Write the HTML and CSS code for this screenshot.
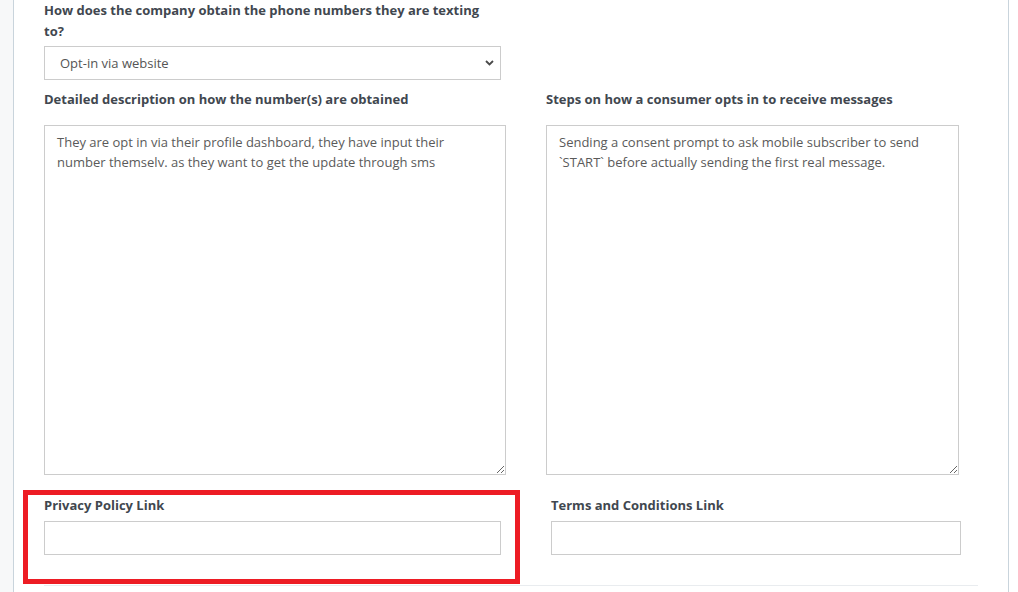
FILE: index.html
```html
<!DOCTYPE html>
<html lang="en">
<head>
    <meta charset="UTF-8">
    <meta name="viewport" content="width=device-width, initial-scale=1.0">
    <title>Campaign details</title>
    <link rel="stylesheet" href="styles.css">
</head>
<body>
    <div class="page">
        <div class="sidebar-edge"></div>

        <div class="panel">
            <div class="field field-source">
                <label class="label" for="source">How does the company obtain the phone numbers they are texting to?</label>
                <div class="select-wrap">
                    <select class="select" id="source">
                        <option>Opt-in via website</option>
                        <option>Opt-in via SMS keyword</option>
                        <option>Paper form</option>
                    </select>
                    <svg class="chevron" width="9" height="6" viewBox="0 0 9 6">
                        <path d="M1 1 L4.5 4.5 L8 1" fill="none" stroke="#4a4a4a" stroke-width="1.8"/>
                    </svg>
                </div>
            </div>

            <div class="row row-text">
                <div class="col col-left">
                    <label class="label label-gap" for="obtained">Detailed description on how the number(s) are obtained</label>
                    <textarea class="textarea" id="obtained">They are opt in via their profile dashboard, they have input their number themselv. as they want to get the update through sms</textarea>
                </div>
                <div class="col col-right">
                    <label class="label label-gap" for="optin">Steps on how a consumer opts in to receive messages</label>
                    <textarea class="textarea" id="optin">Sending a consent prompt to ask mobile subscriber to send `START` before actually sending the first real message.</textarea>
                </div>
            </div>

            <div class="row row-links">
                <div class="highlight"></div>
                <div class="field link-left">
                    <label class="label label-small-gap" for="privacy">Privacy Policy Link</label>
                    <input class="input" type="text" id="privacy">
                </div>
                <div class="field link-right">
                    <label class="label label-small-gap" for="terms">Terms and Conditions Link</label>
                    <input class="input" type="text" id="terms">
                </div>
            </div>

            <hr class="divider">
        </div>
    </div>
</body>
</html>
```

FILE: styles.css
```css
body {
    margin: 0;
    padding: 0;
    font-family: "Open Sans", "Noto Sans", sans-serif;
    font-size: 13px;
    background-color: #fff;
}

.page {
    display: flex;
    height: 592px;
    overflow: hidden;
}

.sidebar-edge {
    width: 13px;
    flex: none;
    background-color: #f7f8f9;
}

.panel {
    width: 964px;
    flex: none;
    padding-left: 30px;
    background: white;
    border-left: 1px solid #c9d4dc;
    border-right: 1px solid #c9d4dc;
}

.label {
    display: block;
    font-weight: bold;
    line-height: 21px;
    color: #41474f;
}

.field-source {
    width: 457px;
}

.select-wrap {
    position: relative;
    margin-top: 4px;
}

.select {
    display: block;
    width: 100%;
    height: 34px;
    padding: 0 15px;
    border: 1px solid #cccccc;
    border-radius: 0;
    background: white;
    font-family: inherit;
    font-size: 13px;
    color: #555;
    -webkit-appearance: none;
    appearance: none;
    box-sizing: border-box;
}

.chevron {
    position: absolute;
    right: 7px;
    top: 14px;
    pointer-events: none;
}

.row {
    display: flex;
}

.row-text {
    margin-top: 9px;
}

.label-gap {
    margin-bottom: 15px;
}

.col-left {
    width: 462px;
}

.col-right {
    width: 413px;
    margin-left: 40px;
}

.textarea {
    display: block;
    width: 100%;
    height: 350px;
    padding: 6px 12px;
    border: 1px solid #cccccc;
    font-family: inherit;
    font-size: 13px;
    line-height: 20px;
    color: #5a5a5a;
    box-sizing: border-box;
    margin: 0;
}

.row-links {
    position: relative;
    margin-top: 20px;
}

.label-small-gap {
    margin-bottom: 5px;
}

.link-left {
    width: 457px;
}

.link-right {
    width: 410px;
    margin-left: 50px;
}

.input {
    display: block;
    width: 100%;
    height: 34px;
    border: 1px solid #cccccc;
    padding: 0 12px;
    box-sizing: border-box;
    font-family: inherit;
    font-size: 13px;
    margin: 0;
}

/* annotation drawn over the privacy field */
.highlight {
    position: absolute;
    left: -21px;
    top: -5px;
    width: 487px;
    height: 84px;
    border: 5px solid #ed1c24;
    pointer-events: none;
}

.divider {
    width: 934px;
    margin: 30px 0 0 0;
    border: none;
    border-top: 1px solid #e9ecef;
}
```
